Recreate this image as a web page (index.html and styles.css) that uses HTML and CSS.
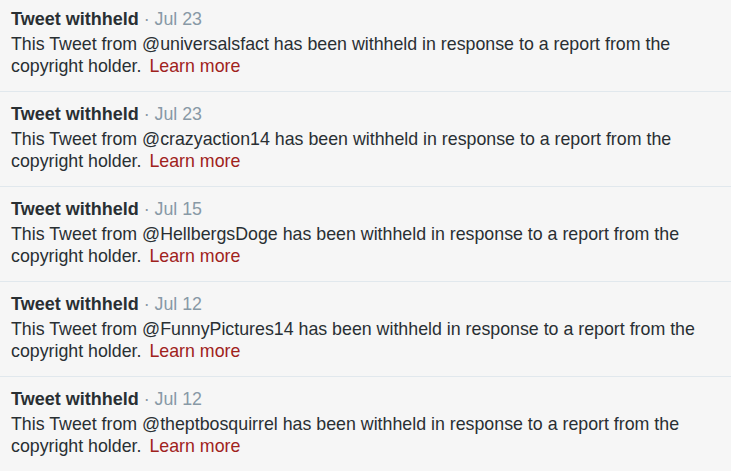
FILE: index.html
```html
<!DOCTYPE html>
<html lang="en">
<head>
    <meta charset="UTF-8">
    <meta name="viewport" content="width=device-width, initial-scale=1.0">
    <title>Withheld Tweets</title>
    <link rel="stylesheet" href="styles.css">
</head>
<body>
    <ol class="stream">
        <li class="tweet">
            <div class="header"><strong>Tweet withheld</strong> <span class="time">· Jul 23</span></div>
            <p>This Tweet from @universalsfact has been withheld in response to a report from the copyright holder. <a href="#">Learn more</a></p>
        </li>
        <li class="tweet">
            <div class="header"><strong>Tweet withheld</strong> <span class="time">· Jul 23</span></div>
            <p>This Tweet from @crazyaction14 has been withheld in response to a report from the copyright holder. <a href="#">Learn more</a></p>
        </li>
        <li class="tweet">
            <div class="header"><strong>Tweet withheld</strong> <span class="time">· Jul 15</span></div>
            <p>This Tweet from @HellbergsDoge has been withheld in response to a report from the copyright holder. <a href="#">Learn more</a></p>
        </li>
        <li class="tweet">
            <div class="header"><strong>Tweet withheld</strong> <span class="time">· Jul 12</span></div>
            <p>This Tweet from @FunnyPictures14 has been withheld in response to a report from the copyright holder. <a href="#">Learn more</a></p>
        </li>
        <li class="tweet">
            <div class="header"><strong>Tweet withheld</strong> <span class="time">· Jul 12</span></div>
            <p>This Tweet from @theptbosquirrel has been withheld in response to a report from the copyright holder. <a href="#">Learn more</a></p>
        </li>
    </ol>
</body>
</html>
```

FILE: styles.css
```css
body {
    margin: 0;
    background-color: #f6f6f6;
    font-family: "Liberation Sans", Arial, sans-serif;
    color: #292f33;
}
.stream {
    list-style: none;
    margin: -3px 0 0;
    padding: 0;
}
.tweet {
    padding: 11px 11px 14px;
    border-bottom: 1px solid #e1e8ed;
    font-size: 17.8px;
    line-height: 22px;
}
.header {
    margin-bottom: 3px;
}
.header strong {
    font-size: 18px;
    font-weight: bold;
}
.time {
    color: #8899a6;
}
.tweet p {
    margin: 0;
    max-width: 700px;
}
.tweet a {
    margin-left: 3px;
    color: #a0221c;
    text-decoration: none;
}
```
